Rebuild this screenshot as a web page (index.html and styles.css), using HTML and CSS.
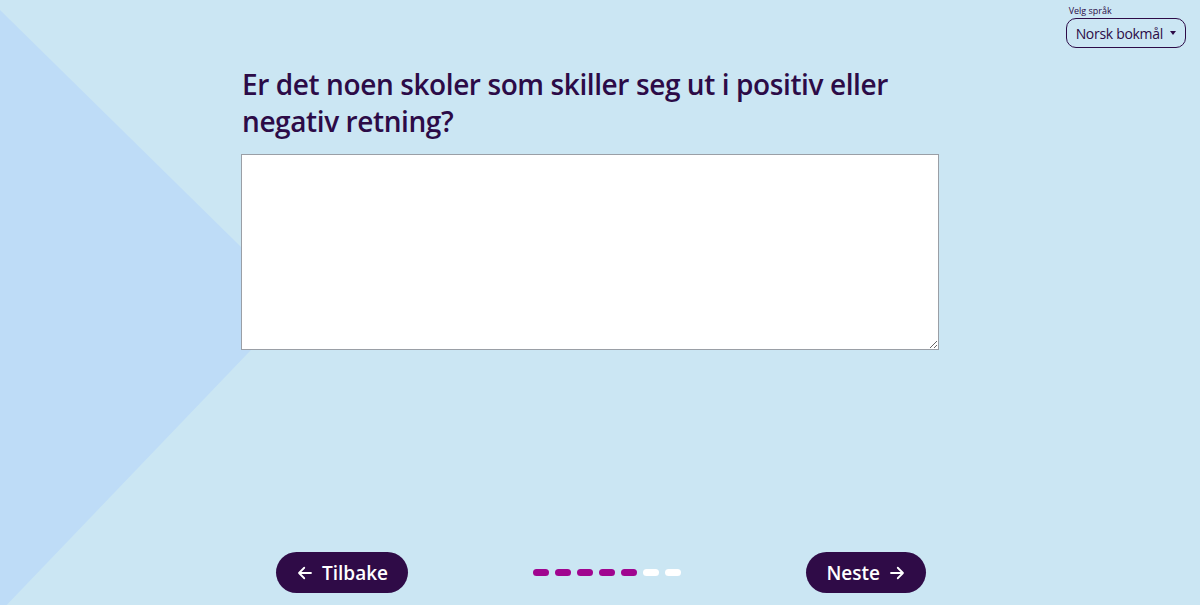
FILE: index.html
```html
<!DOCTYPE html>
<html lang="no">
<head>
    <meta charset="UTF-8">
    <meta name="viewport" content="width=device-width, initial-scale=1.0">
    <title>Spørsmål</title>
    <link rel="stylesheet" href="styles.css">
</head>
<body>
    <div class="backdrop"></div>

    <div class="lang">
        <label class="lang-label" for="lang">Velg språk</label>
        <div class="lang-select" id="lang">
            <span>Norsk bokmål</span>
            <span class="caret"></span>
        </div>
    </div>

    <main class="question">
        <h1>Er det noen skoler som skiller seg ut i positiv eller negativ retning?</h1>
        <textarea class="answer"></textarea>
    </main>

    <nav class="steps">
        <button class="btn">
            <svg width="18" height="18" viewBox="0 0 24 24" fill="none" stroke="currentColor" stroke-width="2.4" stroke-linecap="round" stroke-linejoin="round"><path d="M20 12H4M11 5l-7 7 7 7"/></svg>
            Tilbake
        </button>
        <div class="dots">
            <span class="dot done"></span>
            <span class="dot done"></span>
            <span class="dot done"></span>
            <span class="dot done"></span>
            <span class="dot done"></span>
            <span class="dot"></span>
            <span class="dot"></span>
        </div>
        <button class="btn">
            Neste
            <svg width="18" height="18" viewBox="0 0 24 24" fill="none" stroke="currentColor" stroke-width="2.4" stroke-linecap="round" stroke-linejoin="round"><path d="M4 12h16M13 5l7 7-7 7"/></svg>
        </button>
    </nav>
</body>
</html>
```

FILE: styles.css
```css
body {
    margin: 0;
    height: 605px;
    overflow: hidden;
    font-family: "Open Sans", sans-serif;
    color: #2c0b47;
    background-color: #cbe6f3;
    display: flex;
    flex-direction: column;
    position: relative;
}

.backdrop {
    position: absolute;
    inset: 0;
    background-color: #bedcf7;
    clip-path: polygon(0 10px, 297px 302px, 0 612px);
}

.lang {
    position: absolute;
    top: 4px;
    right: 14px;
    display: flex;
    flex-direction: column;
}

.lang-label {
    font-size: 9px;
    margin: 0 0 1px 3px;
}

.lang-select {
    display: flex;
    align-items: center;
    gap: 7px;
    height: 28px;
    padding: 0 9px;
    border: 1px solid #2c0b47;
    border-radius: 10px;
    font-size: 14px;
    letter-spacing: -0.3px;
}

.caret {
    border-left: 3.5px solid transparent;
    border-right: 3.5px solid transparent;
    border-top: 4px solid #2c0b47;
}

.question {
    position: relative;
    width: 698px;
    margin: 66px 0 0 241px;
    flex: 1;
}

h1 {
    font-size: 28px;
    font-weight: 600;
    line-height: 37px;
    letter-spacing: -0.4px;
    margin: 0 0 14px 1px;
}

.answer {
    display: block;
    box-sizing: border-box;
    width: 698px;
    height: 196px;
    margin: 0;
    border: 1px solid #9a9fa6;
    background: #fff;
    resize: vertical;
}

.steps {
    position: relative;
    display: flex;
    justify-content: space-between;
    align-items: center;
    width: 650px;
    margin: 0 auto 12px 276px;
}

.btn {
    display: flex;
    align-items: center;
    gap: 8px;
    height: 41px;
    padding: 0 20px;
    border: none;
    border-radius: 21px;
    background-color: #2f0b47;
    color: #fff;
    font-family: "Open Sans", sans-serif;
    font-size: 19px;
    font-weight: 600;
    cursor: pointer;
}

.dots {
    display: flex;
    gap: 6px;
}

.dot {
    width: 16px;
    height: 7px;
    border-radius: 4px;
    background-color: #fff;
}

.dot.done {
    background-color: #a0058f;
}
```
